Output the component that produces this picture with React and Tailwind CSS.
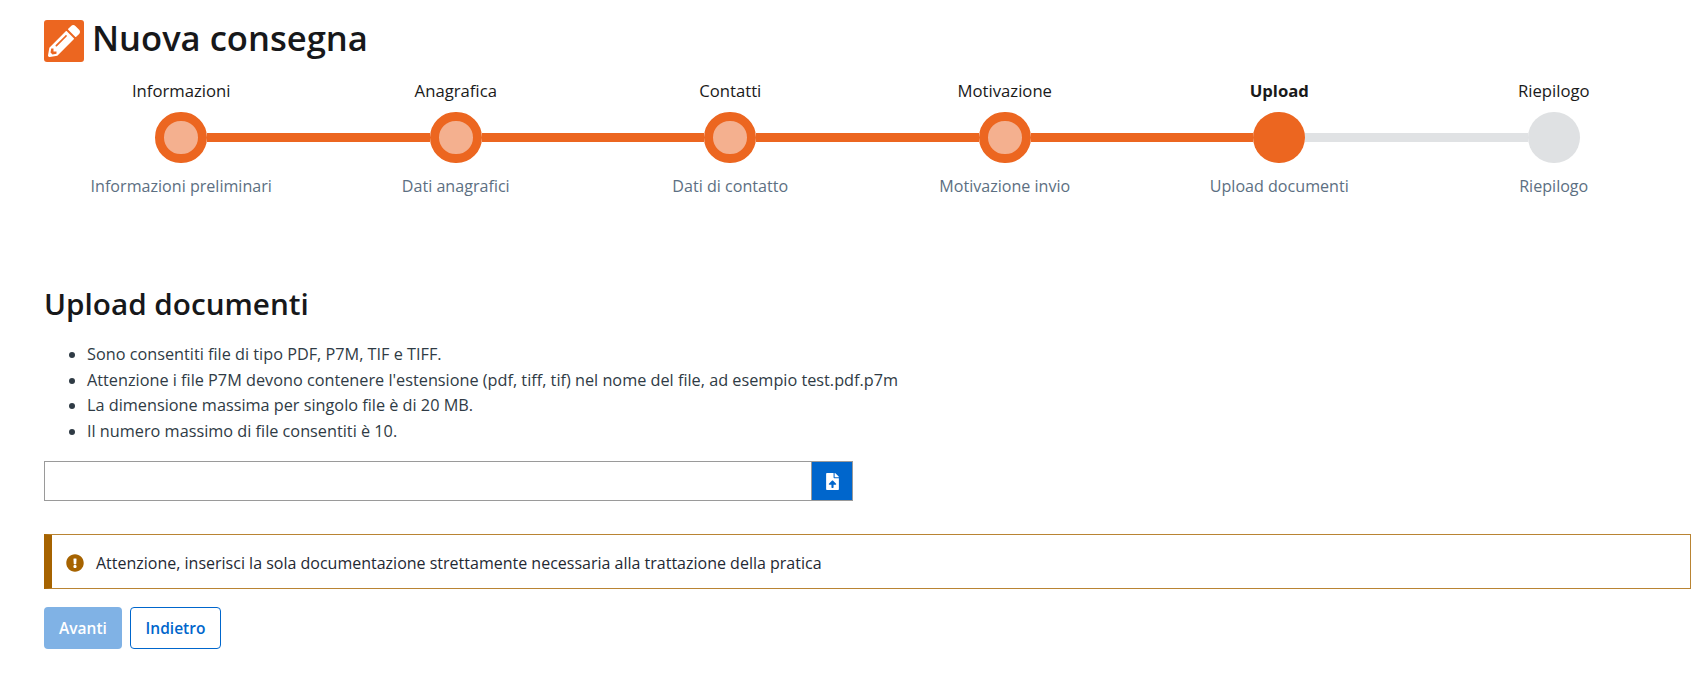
import { FaPencilAlt, FaFileUpload, FaExclamationCircle } from "react-icons/fa";

const steps = [
  { label: "Informazioni", sub: "Informazioni preliminari", state: "done" },
  { label: "Anagrafica", sub: "Dati anagrafici", state: "done" },
  { label: "Contatti", sub: "Dati di contatto", state: "done" },
  { label: "Motivazione", sub: "Motivazione invio", state: "done" },
  { label: "Upload", sub: "Upload documenti", state: "current" },
  { label: "Riepilogo", sub: "Riepilogo", state: "todo" },
];

const rules = [
  "Sono consentiti file di tipo PDF, P7M, TIF e TIFF.",
  "Attenzione i file P7M devono contenere l'estensione (pdf, tiff, tif) nel nome del file, ad esempio test.pdf.p7m",
  "La dimensione massima per singolo file è di 20 MB.",
  "Il numero massimo di file consentiti è 10.",
];

const Step = ({ step, index }) => {
  const isFirst = index === 0;
  const isLast = index === steps.length - 1;
  const leftDone = step.state !== "todo";
  const rightDone = step.state === "done";

  return (
    <div className="flex flex-col items-center">
      <div className={`text-[16.7px] leading-[22px] text-[#1a1a1a] ${step.state === "current" ? "font-bold" : ""}`}>
        {step.label}
      </div>
      <div className="flex items-center w-full mt-[10px]">
        <div className={`flex-1 h-[9px] ${isFirst ? "" : leftDone ? "bg-[#ec6620]" : "bg-[#e0e2e4]"}`}></div>
        {step.state === "done" && (
          <div className="w-[52px] h-[51px] rounded-full border-[9px] border-[#ec6620] bg-[#f4b08f]"></div>
        )}
        {step.state === "current" && <div className="w-[52px] h-[51px] rounded-full bg-[#ec6620]"></div>}
        {step.state === "todo" && <div className="w-[52px] h-[51px] rounded-full bg-[#dfe1e3]"></div>}
        <div className={`flex-1 h-[9px] ${isLast ? "" : rightDone ? "bg-[#ec6620]" : "bg-[#e0e2e4]"}`}></div>
      </div>
      <div className="text-[16.1px] leading-[22px] text-[#5c6f82] mt-[12px]">{step.sub}</div>
    </div>
  );
};

const App = () => {
  return (
    <div className="min-h-[678px] bg-white pl-[44px] pr-[14px] pt-[20px] font-['Open_Sans',sans-serif] text-[#1a1a1a]">
      <div className="flex items-start gap-[8px] h-[42px]">
        <div className="w-[40px] h-[42px] rounded-[3px] bg-[#ec6620] flex items-center justify-center">
          <FaPencilAlt className="text-white w-[32px] h-[32px]" />
        </div>
        <h1 className="text-[34.6px] leading-[36px] font-semibold text-[#17181a]">Nuova consegna</h1>
      </div>

      <div className="grid grid-cols-6 mt-[18px]">
        {steps.map((step, i) => (
          <Step key={step.label} step={step} index={i} />
        ))}
      </div>

      <h2 className="text-[29.7px] leading-[36px] font-semibold text-[#17181a] mt-[89px]">Upload documenti</h2>

      <ul className="list-disc pl-[43px] mt-[20px] text-[16.25px] leading-[25.6px] text-[#2f3b45]">
        {rules.map((r) => (
          <li key={r}>{r}</li>
        ))}
      </ul>

      <div className="flex w-[809px] h-[40px] mt-[17px] border border-[#9a9a9a]">
        <div className="flex-1"></div>
        <button className="w-[41px] bg-[#0066cc] flex items-center justify-center border-l border-[#9a9a9a]">
          <FaFileUpload className="text-white w-[15px] h-[17px]" />
        </button>
      </div>

      <div className="flex items-center h-[55px] mt-[33px] pt-[2px] border border-[#b98433] border-l-[8px] border-l-[#a66300] pl-[14px]">
        <FaExclamationCircle className="text-[#a66300] w-[18px] h-[18px]" />
        <span className="ml-[12px] text-[16px] text-[#1f2933]">
          Attenzione, inserisci la sola documentazione strettamente necessaria alla trattazione della pratica
        </span>
      </div>

      <div className="flex gap-[8px] mt-[18px]">
        <button className="w-[78px] h-[42px] rounded-[4px] bg-[#80b2e5] text-white text-[15.5px] font-semibold">
          Avanti
        </button>
        <button className="w-[91px] h-[42px] rounded-[4px] bg-white border-[1.5px] border-[#0066cc] text-[#0066cc] text-[15.5px] font-semibold">
          Indietro
        </button>
      </div>
    </div>
  );
};

export default App;
